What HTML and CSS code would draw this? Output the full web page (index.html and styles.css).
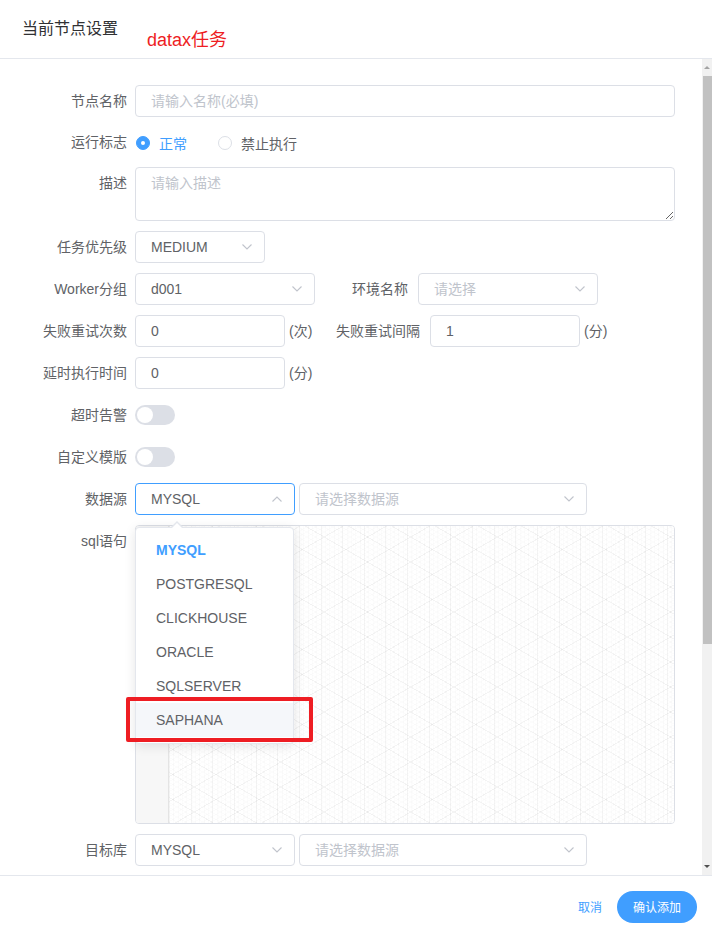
FILE: index.html
```html
<!DOCTYPE html>
<html lang="zh-CN">
<head>
<meta charset="utf-8">
<title>当前节点设置</title>
<link rel="stylesheet" href="styles.css">
</head>
<body>
<div class="dialog">
  <header class="head">
    <span class="title">当前节点设置</span>
    <span class="tag">datax任务</span>
  </header>

  <div class="body">
    <div class="form">
      <div class="row">
        <span class="lbl">节点名称</span>
        <input class="inp w540" type="text" placeholder="请输入名称(必填)">
      </div>

      <div class="row short">
        <span class="lbl">运行标志</span>
        <div class="radios">
          <span class="radio on"><i class="dot"></i>正常</span>
          <span class="radio"><i class="dot"></i>禁止执行</span>
        </div>
      </div>

      <div class="row">
        <span class="lbl">描述</span>
        <textarea class="ta" placeholder="请输入描述"></textarea>
      </div>

      <div class="row">
        <span class="lbl">任务优先级</span>
        <div class="sel w130"><span class="val">MEDIUM</span><svg class="chev" viewBox="0 0 10 6" width="10" height="6"><polyline points="0.5,0.5 5,5 9.5,0.5"/></svg></div>
      </div>

      <div class="row">
        <span class="lbl">Worker分组</span>
        <div class="sel w180"><span class="val">d001</span><svg class="chev" viewBox="0 0 10 6" width="10" height="6"><polyline points="0.5,0.5 5,5 9.5,0.5"/></svg></div>
        <span class="lbl lbl2 w103">环境名称</span>
        <div class="sel w180"><span class="val ph">请选择</span><svg class="chev" viewBox="0 0 10 6" width="10" height="6"><polyline points="0.5,0.5 5,5 9.5,0.5"/></svg></div>
      </div>

      <div class="row">
        <span class="lbl">失败重试次数</span>
        <input class="inp w150" type="text" value="0">
        <span class="unit">(次)</span>
        <span class="lbl lbl2 w117">失败重试间隔</span>
        <input class="inp w150" type="text" value="1">
        <span class="unit">(分)</span>
      </div>

      <div class="row">
        <span class="lbl">延时执行时间</span>
        <input class="inp w150" type="text" value="0">
        <span class="unit">(分)</span>
      </div>

      <div class="row">
        <span class="lbl">超时告警</span>
        <div class="switch-wrap"><span class="switch"></span></div>
      </div>

      <div class="row">
        <span class="lbl">自定义模版</span>
        <div class="switch-wrap"><span class="switch"></span></div>
      </div>

      <div class="row top-layer">
        <span class="lbl">数据源</span>
        <div class="dsrc">
          <div class="sel w160 focus"><span class="val">MYSQL</span><svg class="chev up" viewBox="0 0 10 6" width="10" height="6"><polyline points="0.5,0.5 5,5 9.5,0.5"/></svg></div>
          <div class="popper">
            <ul class="opts">
              <li class="opt sel-opt">MYSQL</li>
              <li class="opt">POSTGRESQL</li>
              <li class="opt">CLICKHOUSE</li>
              <li class="opt">ORACLE</li>
              <li class="opt">SQLSERVER</li>
              <li class="opt hover">SAPHANA</li>
            </ul>
            <span class="mark"></span>
          </div>
        </div>
        <div class="sel w288 gap4"><span class="val ph">请选择数据源</span><svg class="chev" viewBox="0 0 10 6" width="10" height="6"><polyline points="0.5,0.5 5,5 9.5,0.5"/></svg></div>
      </div>

      <div class="row">
        <span class="lbl">sql语句</span>
        <div class="editor">
          <div class="gutter"></div>
          <div class="grid"></div>
        </div>
      </div>

      <div class="row">
        <span class="lbl">目标库</span>
        <div class="sel w160"><span class="val">MYSQL</span><svg class="chev" viewBox="0 0 10 6" width="10" height="6"><polyline points="0.5,0.5 5,5 9.5,0.5"/></svg></div>
        <div class="sel w288 gap4"><span class="val ph">请选择数据源</span><svg class="chev" viewBox="0 0 10 6" width="10" height="6"><polyline points="0.5,0.5 5,5 9.5,0.5"/></svg></div>
      </div>
    </div>

    <div class="sb">
      <div class="sb-btn"><span class="tri-up"></span></div>
      <div class="sb-thumb"></div>
      <div class="sb-fill"></div>
      <div class="sb-btn"><span class="tri-down"></span></div>
    </div>
  </div>

  <footer class="foot">
    <span class="cancel">取消</span>
    <span class="btn">确认添加</span>
  </footer>
</div>
</body>
</html>
```

FILE: styles.css
```css
* { box-sizing: border-box; }

html, body {
  margin: 0;
  padding: 0;
  background: #fff;
}

body {
  font-family: "Liberation Sans", "Noto Sans CJK SC", sans-serif;
  font-size: 14px;
  color: #606266;
}

.dialog {
  width: 712px;
  height: 932px;
  display: flex;
  flex-direction: column;
  overflow: hidden;
}

/* header */
.head {
  height: 59px;
  flex: none;
  border-bottom: 1px solid #e4e7ed;
  display: flex;
  align-items: flex-start;
  padding: 15px 0 0 22px;
}
.title {
  font-size: 16px;
  line-height: 24px;
  height: 24px;
  color: #303133;
  font-family: "Noto Sans CJK SC", sans-serif;
}
.tag {
  font-size: 18px;
  line-height: 24px;
  height: 24px;
  color: #ee1d23;
  margin: 13px 0 0 29px;
}

/* body */
.body {
  height: 816px;
  flex: none;
  display: flex;
  overflow: hidden;
}
.form {
  flex: 1;
  padding: 26px 27px 0 0;
}
.row {
  display: flex;
  align-items: flex-start;
  margin-bottom: 10px;
  min-height: 32px;
}
.row.short { min-height: 30px; }
.top-layer {
  position: relative;
  z-index: 5;
}
.lbl {
  flex: none;
  width: 135px;
  height: 32px;
  padding-right: 8px;
  text-align: right;
  line-height: 32px;
  color: #606266;
  white-space: nowrap;
}
.short .lbl {
  height: 30px;
  line-height: 30px;
}
.lbl2 { padding-right: 10px; }
.w103 { width: 103px; }
.w117 { width: 117px; }

.inp {
  flex: none;
  height: 32px;
  border: 1px solid #dcdfe6;
  border-radius: 4px;
  padding: 0 15px;
  font: inherit;
  font-size: 14px;
  color: #606266;
  outline: none;
  background: #fff;
}
.inp::placeholder, .ta::placeholder { color: #c0c4cc; }
.w540 { width: 540px; }
.w150 { width: 150px; }
.w130 { width: 130px; }
.w160 { width: 160px; }
.w180 { width: 180px; }
.w288 { width: 288px; }
.gap4 { margin-left: 4px; }

.unit {
  flex: none;
  width: 28px;
  height: 32px;
  padding-left: 4px;
  line-height: 32px;
  white-space: nowrap;
}

/* radios */
.radios {
  display: flex;
  align-items: center;
  height: 30px;
  padding-top: 1px;
}
.radio {
  display: inline-flex;
  align-items: center;
  height: 20px;
  margin-right: 30px;
  color: #606266;
  font-family: "Noto Sans CJK SC", sans-serif;
  line-height: 20px;
}
.radio.on { color: #409eff; }
.dot {
  width: 14px;
  height: 14px;
  border: 1px solid #dcdfe6;
  border-radius: 50%;
  margin: 0 9px 0 1px;
  display: inline-flex;
  align-items: center;
  justify-content: center;
  background: #fff;
}
.radio.on .dot {
  background: #409eff;
  border-color: #409eff;
}
.radio.on .dot::after {
  content: "";
  width: 4px;
  height: 4px;
  border-radius: 50%;
  background: #fff;
}

/* textarea */
.ta {
  flex: none;
  width: 540px;
  height: 54px;
  border: 1px solid #dcdfe6;
  border-radius: 4px;
  padding: 5px 15px;
  font: inherit;
  font-size: 14px;
  line-height: 1.5;
  color: #606266;
  resize: vertical;
  outline: none;
  display: block;
  margin: 0;
}

/* select */
.sel {
  flex: none;
  height: 32px;
  border: 1px solid #dcdfe6;
  border-radius: 4px;
  padding: 0 12px 0 15px;
  display: flex;
  align-items: center;
  justify-content: space-between;
  background: #fff;
}
.sel.focus { border-color: #409eff; }
.val {
  color: #606266;
  white-space: nowrap;
  line-height: 20px;
  height: 20px;
}
.val.ph { color: #c0c4cc; }
.chev {
  flex: none;
  fill: none;
  stroke: #c0c4cc;
  stroke-width: 1.1;
}
.chev.up { transform: rotate(180deg); }

/* switch */
.switch-wrap {
  height: 32px;
  display: flex;
  align-items: center;
}
.switch {
  width: 40px;
  height: 20px;
  border-radius: 10px;
  background: #dcdfe6;
  display: flex;
  align-items: center;
  padding: 0 2px;
}
.switch::after {
  content: "";
  width: 16px;
  height: 16px;
  border-radius: 50%;
  background: #fff;
}

/* datasource dropdown */
.dsrc {
  position: relative;
  flex: none;
}
.popper {
  position: absolute;
  top: 44px;
  left: 0;
  width: 159px;
  background: #fff;
  border: 1px solid #e4e7ed;
  border-radius: 4px;
  box-shadow: 0 2px 12px rgba(0, 0, 0, 0.1);
  z-index: 10;
}
.popper::before,
.popper::after {
  content: "";
  position: absolute;
  left: 35px;
  width: 0;
  height: 0;
  border-style: solid;
  border-color: transparent;
}
.popper::before {
  top: -7px;
  border-width: 0 6px 6px 6px;
  border-bottom-color: #e4e7ed;
}
.popper::after {
  top: -5px;
  border-width: 0 6px 6px 6px;
  border-bottom-color: #fff;
}
.opts {
  list-style: none;
  margin: 0;
  padding: 5px 0 6px;
}
.opt {
  height: 34px;
  line-height: 34px;
  padding: 0 20px;
  color: #606266;
  white-space: nowrap;
}
.opt.sel-opt {
  color: #409eff;
  font-weight: bold;
}
.opt.hover { background: #f5f7fa; }
.mark {
  position: absolute;
  left: -10px;
  top: 169px;
  width: 187px;
  height: 45px;
  border: 4px solid #ee1d23;
  border-radius: 2px;
}

/* editor */
.editor {
  flex: none;
  width: 540px;
  height: 299px;
  border: 1px solid #dcdfe6;
  border-radius: 4px;
  display: flex;
  overflow: hidden;
}
.gutter {
  width: 33px;
  flex: none;
  background: #f7f7f7;
  border-right: 1px solid #e4e4e4;
}
.grid {
  flex: 1;
  background-color: #fff;
  background-image:
    repeating-linear-gradient(90deg, rgba(0,0,0,0.032) 0 1px, transparent 1px 21.65px),
    repeating-linear-gradient(30deg, rgba(0,0,0,0.03) 0 1px, transparent 1px 21.65px),
    repeating-linear-gradient(150deg, rgba(0,0,0,0.03) 0 1px, transparent 1px 21.65px),
    repeating-linear-gradient(90deg, rgba(0,0,0,0.012) 0 1px, transparent 1px 4.33px),
    repeating-linear-gradient(30deg, rgba(0,0,0,0.01) 0 1px, transparent 1px 4.33px),
    repeating-linear-gradient(150deg, rgba(0,0,0,0.01) 0 1px, transparent 1px 4.33px);
}

/* scrollbar */
.sb {
  width: 10px;
  flex: none;
  background: #f1f1f1;
  display: flex;
  flex-direction: column;
}
.sb-btn {
  height: 17px;
  flex: none;
  display: flex;
  align-items: center;
  justify-content: center;
}
.tri-up, .tri-down {
  width: 0;
  height: 0;
  border-left: 3px solid transparent;
  border-right: 3px solid transparent;
}
.tri-up { border-bottom: 3px solid #a3a3a3; }
.tri-down { border-top: 3px solid #505050; }
.sb-thumb {
  height: 568px;
  flex: none;
  margin-left: 1px;
  background: #c1c1c1;
}
.sb-fill { flex: 1; }

/* footer */
.foot {
  flex: 1;
  border-top: 1px solid #e4e7ed;
  display: flex;
  justify-content: flex-end;
  align-items: flex-start;
  padding: 15px 15px 0 0;
  font-family: "Noto Sans CJK SC", sans-serif;
  font-size: 12px;
}
.cancel {
  line-height: 32px;
  height: 32px;
  color: #409eff;
  margin-right: 15px;
}
.btn {
  height: 32px;
  line-height: 32px;
  padding: 0 16px;
  border-radius: 16px;
  background: #409eff;
  color: #fff;
}
```
